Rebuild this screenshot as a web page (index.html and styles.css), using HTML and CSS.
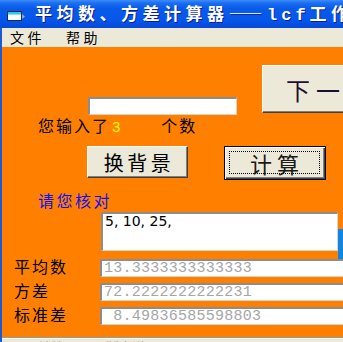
FILE: index.html
```html
<!DOCTYPE html>
<html lang="zh">
<head>
<meta charset="utf-8">
<title>平均数、方差计算器</title>
<link rel="stylesheet" href="styles.css">
</head>
<body>
<div class="window">
  <div class="titlebar">
    <svg class="ticon" width="18" height="10" viewBox="0 0 18 10">
      <rect x="0.5" y="0.5" width="14" height="9" fill="#e8fbff" stroke="#1a2a4a"/>
      <rect x="1" y="1" width="13" height="2.5" fill="#33c8e8"/>
      <rect x="2" y="4.5" width="10" height="4" fill="#ffffff"/>
      <polygon points="15,3 18,5.5 15,8" fill="#9ab"/>
    </svg>
    <span class="title">平均数、方差计算器——<span class="latin">lcf</span>工作室</span>
  </div>
  <div class="frame">
    <div class="menubar">
      <span class="menu">文件</span>
      <span class="menu">帮助</span>
    </div>
    <div class="client">
      <div class="row-top">
        <div class="field input"></div>
        <div class="btn big">下一步</div>
      </div>
      <div class="count">您输入了<span class="num">3</span><span class="unit">个数</span></div>
      <div class="row-btns">
        <div class="btn b1">换背景</div>
        <div class="btn default"><div class="focus">计算</div></div>
      </div>
      <div class="check">请您核对</div>
      <div class="row-list">
        <div class="field list">5, 10, 25,</div>
        <div class="bluebar"></div>
      </div>
      <div class="results">
        <div class="res"><span class="lab">平均数</span><div class="field out">13.3333333333333</div></div>
        <div class="res"><span class="lab">方差</span><div class="field out">72.2222222222231</div></div>
        <div class="res"><span class="lab">标准差</span><div class="field out">&nbsp;8.49836585598803</div></div>
      </div>
    </div>
    <div class="status"><span class="stext">Ucid 计算 by 0.1 版本说明</span></div>
  </div>
</div>
</body>
</html>
```
FILE: styles.css
```css
html, body {
  margin: 0;
  padding: 0;
}
body {
  width: 343px;
  height: 342px;
  overflow: hidden;
  background: #ff8000;
  font-family: "Noto Sans CJK SC", "Liberation Sans", sans-serif;
}
.window {
  width: 343px;
  height: 342px;
  overflow: hidden;
  display: flex;
  flex-direction: column;
}
.titlebar {
  height: 28px;
  flex: none;
  display: flex;
  align-items: center;
  background: linear-gradient(#3d8ef8 0px, #1c6ef2 3px, #0a5be9 8px, #0656ea 20px, #0549d8 28px);
  white-space: nowrap;
  overflow: hidden;
}
.ticon {
  margin-left: 7px;
  margin-top: 3px;
  flex: none;
}
.title {
  margin-left: 10px;
  color: #fff;
  font-weight: bold;
  font-size: 17px;
  letter-spacing: 4.5px;
  line-height: 28px;
  text-shadow: 1px 1px 0 #0a2088;
  flex: none;
}
.latin {
  font-family: "Liberation Mono", monospace;
  font-size: 17px;
  letter-spacing: 4px;
}
.frame {
  flex: 1;
  display: flex;
  flex-direction: column;
  border-left: 2px solid #1a5ad8;
}
.menubar {
  height: 19px;
  flex: none;
  background: #ece9d8;
  display: flex;
  align-items: center;
}
.menu {
  font-size: 14px;
  line-height: 19px;
  letter-spacing: 3.5px;
  color: #000;
  flex: none;
}
.menu:first-child {
  margin-left: 8px;
}
.menu + .menu {
  margin-left: 21px;
}
.client {
  height: 290px;
  flex: none;
  background: #ff8000;
  display: flex;
  flex-direction: column;
}
.field {
  box-sizing: border-box;
  flex: none;
  background: #fff;
  border-top: 2px solid #8c8c8c;
  border-left: 2px solid #8c8c8c;
  border-bottom: 1px solid #d8d5c8;
  border-right: 1px solid #d8d5c8;
  overflow: hidden;
  white-space: nowrap;
}
.btn {
  box-sizing: border-box;
  flex: none;
  background: #ece9d8;
  border: 1px solid;
  border-color: #fff #404040 #404040 #fff;
  box-shadow: inset -1px -1px 0 #808080;
  color: #000;
  display: flex;
  align-items: center;
  justify-content: center;
  white-space: nowrap;
  overflow: hidden;
}
.row-top {
  margin-top: 18px;
  height: 50px;
  display: flex;
  align-items: flex-start;
}
.input {
  margin-top: 32px;
  margin-left: 86px;
  width: 149px;
  height: 18px;
}
.big {
  margin-left: 25px;
  width: 120px;
  height: 48px;
  justify-content: flex-start;
  padding-left: 23px;
  font-size: 24px;
  letter-spacing: 6px;
  color: #1a1030;
}
.count {
  margin-top: 2px;
  margin-left: 36px;
  font-size: 16px;
  line-height: 17px;
  letter-spacing: 2px;
  color: #000;
  white-space: nowrap;
}
.num {
  font-family: "Liberation Sans", sans-serif;
  font-size: 15px;
  color: #ffff00;
  margin-left: 2px;
  letter-spacing: 0;
}
.unit {
  margin-left: 41px;
}
.row-btns {
  margin-top: 11px;
  display: flex;
  align-items: flex-start;
}
.b1 {
  margin-left: 85px;
  width: 101px;
  height: 32px;
  font-size: 20px;
  letter-spacing: 3.5px;
  padding-left: 3px;
}
.default {
  margin-left: 36px;
  width: 102px;
  height: 34px;
  border: 1px solid #000;
  box-shadow: inset 1px 1px 0 #fff, inset -1px -1px 0 #404040, inset -2px -2px 0 #808080;
  padding: 4px 5px 5px 4px;
  align-items: stretch;
}
.focus {
  flex: 1;
  border: 1px dotted #000;
  display: flex;
  align-items: center;
  justify-content: center;
  font-size: 22px;
  letter-spacing: 5px;
  padding-left: 5px;
  color: #1a1a1a;
}
.check {
  margin-top: 12px;
  margin-left: 36px;
  font-size: 16px;
  line-height: 17px;
  letter-spacing: 2.5px;
  color: #1010f0;
}
.row-list {
  margin-top: 3px;
  display: flex;
  align-items: flex-start;
}
.list {
  margin-left: 99px;
  width: 237px;
  height: 39px;
  font-family: "DejaVu Sans", sans-serif;
  font-size: 14px;
  line-height: 14px;
  padding-left: 2px;
  color: #000;
}
.bluebar {
  flex: none;
  margin-top: 17px;
  width: 8px;
  height: 30px;
  background: #1285e0;
}
.results {
  display: flex;
  flex-direction: column;
  gap: 6px;
}
.res {
  display: flex;
  align-items: flex-start;
}
.lab {
  flex: none;
  margin-left: 12px;
  width: 86px;
  font-size: 16px;
  line-height: 15px;
  letter-spacing: 2px;
  color: #000;
  white-space: nowrap;
}
.out {
  width: 260px;
  height: 18px;
  font-family: "Liberation Mono", monospace;
  font-size: 15px;
  line-height: 16px;
  letter-spacing: 0.25px;
  padding-left: 2px;
  color: #a6a6a6;
}
.status {
  margin-top: 0;
  flex: 1;
  background: #ece9d8;
  border-top: 1px solid #9a9a9a;
  box-shadow: inset 0 1px 0 #fff;
  overflow: hidden;
}
.stext {
  display: block;
  margin-left: 6px;
  font-size: 13px;
  line-height: 16px;
  margin-top: 1px;
  color: #a0a0a0;
  white-space: nowrap;
}
```
